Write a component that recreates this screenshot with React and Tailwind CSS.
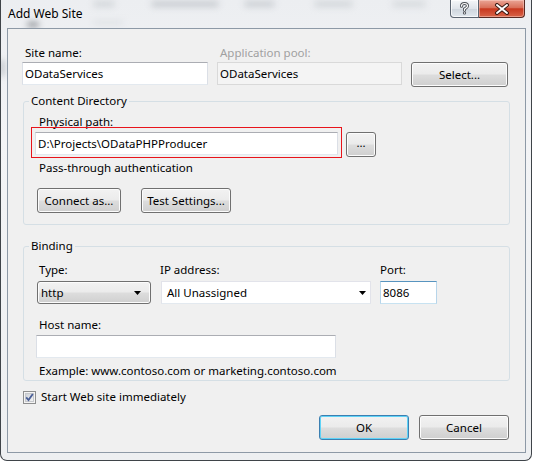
import React from 'react'

const BTN =
  'flex items-center justify-center rounded-[3px] border border-[#707070] bg-[linear-gradient(#f2f2f2,#ebebeb_48%,#dddddd_52%,#cfcfcf)] shadow-[inset_0_0_0_1px_#fcfcfc] text-black'

const BOX = 'border border-[#dbdfe6] border-t-[#abadb3] border-b-[#e3e9ef] bg-white'

const PHYSICAL_PATH = 'D:\\Projects\\ODataPHPProducer'

function Arrow() {
  return (
    <svg width="7" height="4" viewBox="0 0 7 4" className="shrink-0">
      <path d="M0 0h7L3.5 4z" fill="#000" />
    </svg>
  )
}

function TextBox({ value, className = '' }) {
  return (
    <div className={`${BOX} h-[23px] flex items-center pl-[2px] ${className}`}>
      <span className="leading-none">{value}</span>
    </div>
  )
}

function Group({ title, className = '', children }) {
  return (
    <fieldset className={`border border-[#d5dfe5] rounded-[3px] ${className}`}>
      <legend className="ml-[5px] px-[2px] leading-[16px]">{title}</legend>
      {children}
    </fieldset>
  )
}

function Checkbox() {
  return (
    <svg width="13" height="13" viewBox="0 0 13 13">
      <defs>
        <linearGradient id="cb" x1="0" y1="0" x2="1" y2="1">
          <stop offset="0" stopColor="#cbcfd5" />
          <stop offset="1" stopColor="#f6f6f6" />
        </linearGradient>
      </defs>
      <rect x="0.5" y="0.5" width="12" height="12" fill="#f4f4f4" stroke="#8e8f8f" />
      <rect x="2.5" y="2.5" width="8" height="8" fill="url(#cb)" stroke="#c6c8cc" />
      <path d="M3.2 6.4l2.3 2.6 4.3-6" fill="none" stroke="#4a5f97" strokeWidth="1.8" />
    </svg>
  )
}

function TitleButtons() {
  return (
    <div className="flex mr-[6px]">
      <div className="w-[29px] h-[18px] border border-t-0 border-[#5b6470] rounded-bl-[4px] bg-[linear-gradient(#f5f7f9,#dfe4ea_50%,#cdd4dc_51%,#e2e8ee)] shadow-[inset_0_0_0_1px_rgba(255,255,255,0.7)] flex items-center justify-center">
        <svg width="11" height="13" viewBox="0 0 11 13">
          <path d="M2.5 4.2C2.5 2.4 3.8 1.5 5.5 1.5S8.5 2.5 8.5 4c0 1.6-1.8 2-3 3v1.3" fill="none" stroke="#4b4f55" strokeWidth="3" strokeLinecap="round" />
          <path d="M2.5 4.2C2.5 2.4 3.8 1.5 5.5 1.5S8.5 2.5 8.5 4c0 1.6-1.8 2-3 3v1.3" fill="none" stroke="#ffffff" strokeWidth="1.2" strokeLinecap="round" />
          <circle cx="5.5" cy="11" r="1.6" fill="#4b4f55" />
          <circle cx="5.5" cy="11" r="0.7" fill="#fff" />
        </svg>
      </div>
      <div className="w-[46px] h-[18px] border border-t-0 border-l-0 border-[#5a2a22] rounded-br-[4px] bg-[linear-gradient(#eaa596,#d9705a_45%,#c8381f_52%,#d86448)] shadow-[inset_0_0_0_1px_rgba(255,220,210,0.45)] flex items-center justify-center">
        <svg width="16" height="12" viewBox="0 0 16 12">
          <path d="M3 2l10 8M13 2L3 10" stroke="#3a1a14" strokeWidth="4" strokeLinecap="round" />
          <path d="M3 2l10 8M13 2L3 10" stroke="#ffffff" strokeWidth="2" strokeLinecap="round" />
        </svg>
      </div>
    </div>
  )
}

export default function App() {
  return (
    <div className="w-[534px] h-[462px] bg-white overflow-hidden font-['Noto_Sans',sans-serif] text-[11.5px] text-black">
      <div className="relative w-[532px] h-[461px] border-x border-b border-[#3f4449] rounded-b-[7px] bg-[linear-gradient(180deg,#eceef1,#f3f4f6_30%,#edeff1)] overflow-hidden flex flex-col">
        {/* blurred glass background */}
        <div className="absolute inset-0 blur-[3px] pointer-events-none">
          <span className="absolute left-[92px] top-[1px] w-[22px] h-[6px] rounded-full bg-[#d2d6da]" />
          <span className="absolute left-[150px] top-[1px] w-[68px] h-[6px] rounded-full bg-[#c8ccd1]" />
          <span className="absolute left-[243px] top-[1px] w-[31px] h-[6px] rounded-full bg-[#cbcfd4]" />
          <span className="absolute left-[313px] top-[1px] w-[39px] h-[6px] rounded-full bg-[#d2d6da]" />
          <span className="absolute left-[391px] top-[1px] w-[34px] h-[6px] rounded-full bg-[#d6dadd]" />
          <span className="absolute left-[92px] top-[20px] w-[30px] h-[5px] rounded-full bg-[#e0e3e6]" />
          <span className="absolute left-[26px] top-[22px] w-[12px] h-[5px] rounded-full bg-[#8d9196]" />
          <span className="absolute left-[-2px] top-[60px] w-[6px] h-[16px] bg-[#c5c9cd]" />
        </div>

        {/* title bar */}
        <div className="relative h-[28px] flex items-start">
          <span className="ml-[7px] mt-[6px] leading-[16px] text-[12px]">Add Web Site</span>
          <div className="ml-auto">
            <TitleButtons />
          </div>
        </div>

        {/* client area */}
        <div className="relative ml-[6px] w-[519px] h-[425px] border border-[#8d99a6] bg-[#f0f0f0] flex flex-col">
          {/* site name row */}
          <div className="flex pl-[14px] pt-[16px]">
            <div className="w-[186px]">
              <div className="pl-[3px] leading-[16px]">Site name:</div>
              <TextBox value="ODataServices" className="mt-[1px]" />
            </div>
            <div className="w-[185px] ml-[9px]">
              <div className="pl-[3px] leading-[16px] text-[#a0a0a0]">Application pool:</div>
              <div className="mt-[1px] h-[23px] border border-[#d9d9d9] bg-[#f4f4f4] flex items-center pl-[2px]">
                <span className="leading-none">ODataServices</span>
              </div>
            </div>
            <div className="ml-[9px] pt-[17px]">
              <div className={`${BTN} w-[97px] h-[25px]`}>Select...</div>
            </div>
          </div>

          {/* content directory */}
          <Group title="Content Directory" className="ml-[15px] w-[487px] mt-[6px] h-[132px]">
            <div className="pl-[15px] mt-[5px] leading-[16px]">Physical path:</div>
            <div className="flex items-start pl-[11px] mt-[2px]">
              <div className="relative">
                <TextBox value={PHYSICAL_PATH} className="w-[303px]" />
                {/* red highlight drawn over the field */}
                <svg width="311" height="31" className="absolute -left-[4px] -top-[5px] pointer-events-none">
                  <rect x="0.5" y="0.5" width="310" height="30" fill="none" stroke="#e8141b" strokeWidth="1" />
                </svg>
              </div>
              <div className={`${BTN} ml-[8px] w-[30px] h-[25px] pb-[4px]`}>...</div>
            </div>
            <div className="pl-[15px] mt-[3px] leading-[16px]">Pass-through authentication</div>
            <div className="flex pl-[13px] mt-[12px]">
              <div className={`${BTN} w-[84px] h-[25px]`}>Connect as...</div>
              <div className={`${BTN} ml-[20px] w-[90px] h-[25px]`}>Test Settings...</div>
            </div>
          </Group>

          {/* binding */}
          <Group title="Binding" className="ml-[15px] w-[487px] mt-[13px] h-[143px]">
            <div className="flex pl-[13px] mt-[8px]">
              <div className="w-[114px]">
                <div className="pl-[2px] leading-[16px]">Type:</div>
                <div className={`${BTN} mt-[3px] h-[23px] !justify-between pl-[3px] pr-[9px]`}>
                  <span>http</span>
                  <Arrow />
                </div>
              </div>
              <div className="w-[210px] ml-[10px]">
                <div className="-ml-[1px] leading-[16px]">IP address:</div>
                <div className={`${BOX} mt-[3px] h-[23px] flex items-center justify-between pl-[5px] pr-[4px] border-[#e2e3ea] border-t-[#e2e3ea]`}>
                  <span className="leading-none">All Unassigned</span>
                  <Arrow />
                </div>
              </div>
              <div className="w-[57px] ml-[9px]">
                <div className="leading-[16px]">Port:</div>
                <div className="mt-[3px] h-[23px] border border-[#b7d5ea] border-t-[#5794bf] border-b-[#c7e2f1] bg-white flex items-center pl-[2px]">
                  <span className="leading-none">8086</span>
                </div>
              </div>
            </div>
            <div className="pl-[15px] mt-[13px] leading-[16px]">Host name:</div>
            <TextBox value="" className="ml-[12px] mt-[2px] w-[300px]" />
            <div className="pl-[15px] mt-[5px] leading-[16px]">Example: www.contoso.com or marketing.contoso.com</div>
          </Group>

          {/* start checkbox */}
          <div className="flex items-center ml-[15px] mt-[9px] h-[14px]">
            <Checkbox />
            <span className="ml-[5px] leading-[16px]">Start Web site immediately</span>
          </div>

          {/* dialog buttons */}
          <div className="flex justify-end mr-[16px] mt-[11px]">
            <div className="w-[90px] h-[25px] rounded-[3px] border border-[#3c7fb1] bg-[linear-gradient(#f2f2f2,#ebebeb_48%,#dddddd_52%,#cfcfcf)] shadow-[inset_0_0_0_1px_#5fd3f7] flex items-center justify-center">OK</div>
            <div className={`${BTN} ml-[10px] w-[90px] h-[25px]`}>Cancel</div>
          </div>
        </div>
      </div>
    </div>
  )
}
